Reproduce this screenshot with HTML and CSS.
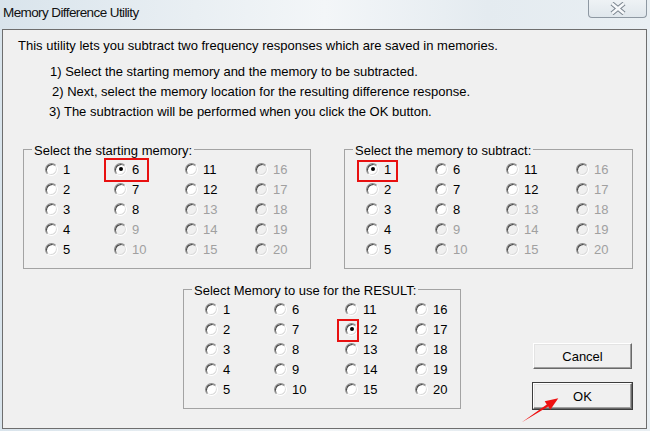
FILE: index.html
```html
<!DOCTYPE html>
<html lang="en">
<head>
<meta charset="utf-8">
<title>Memory Difference Utility</title>
<link rel="stylesheet" href="styles.css">
</head>
<body>
<div class="titlebar">
  <div class="title">Memory Difference Utility</div>
  <div class="close">
    <svg width="16" height="13" viewBox="0 0 16 13">
      <path d="M2 1.5 L14 11.5 M14 1.5 L2 11.5" stroke="#7b858f" stroke-width="4.6" fill="none"/>
      <path d="M2 1.5 L14 11.5 M14 1.5 L2 11.5" stroke="#f6f8fa" stroke-width="2.6" fill="none"/>
    </svg>
  </div>
</div>
<div class="client">
  <div class="intro">
    <p class="l1">This utility lets you subtract two frequency responses which are saved in memories.</p>
    <p class="step s1">1) Select the starting memory and the memory to be subtracted.</p>
    <p class="step s2">2) Next, select the memory location for the resulting difference response.</p>
    <p class="step s3">3) The subtraction will be performed when you click the OK button.</p>
  </div>
  <div class="toprow">
    <fieldset class="group g1">
      <legend>Select the starting memory:</legend>
      <div class="grid">
        <label class="opt"><span class="rb"></span>1</label>
        <label class="opt"><span class="rb on"></span>6<span class="mark mark-a"></span></label>
        <label class="opt"><span class="rb"></span>11</label>
        <label class="opt dis"><span class="rb"></span>16</label>
        <label class="opt"><span class="rb"></span>2</label>
        <label class="opt"><span class="rb"></span>7</label>
        <label class="opt"><span class="rb"></span>12</label>
        <label class="opt dis"><span class="rb"></span>17</label>
        <label class="opt"><span class="rb"></span>3</label>
        <label class="opt"><span class="rb"></span>8</label>
        <label class="opt dis"><span class="rb"></span>13</label>
        <label class="opt dis"><span class="rb"></span>18</label>
        <label class="opt"><span class="rb"></span>4</label>
        <label class="opt dis"><span class="rb"></span>9</label>
        <label class="opt dis"><span class="rb"></span>14</label>
        <label class="opt dis"><span class="rb"></span>19</label>
        <label class="opt"><span class="rb"></span>5</label>
        <label class="opt dis"><span class="rb"></span>10</label>
        <label class="opt dis"><span class="rb"></span>15</label>
        <label class="opt dis"><span class="rb"></span>20</label>
      </div>
    </fieldset>
    <fieldset class="group g2">
      <legend>Select the memory to subtract:</legend>
      <div class="grid">
        <label class="opt"><span class="rb on"></span>1<span class="mark mark-b"></span></label>
        <label class="opt"><span class="rb"></span>6</label>
        <label class="opt"><span class="rb"></span>11</label>
        <label class="opt dis"><span class="rb"></span>16</label>
        <label class="opt"><span class="rb"></span>2</label>
        <label class="opt"><span class="rb"></span>7</label>
        <label class="opt"><span class="rb"></span>12</label>
        <label class="opt dis"><span class="rb"></span>17</label>
        <label class="opt"><span class="rb"></span>3</label>
        <label class="opt"><span class="rb"></span>8</label>
        <label class="opt dis"><span class="rb"></span>13</label>
        <label class="opt dis"><span class="rb"></span>18</label>
        <label class="opt"><span class="rb"></span>4</label>
        <label class="opt dis"><span class="rb"></span>9</label>
        <label class="opt dis"><span class="rb"></span>14</label>
        <label class="opt dis"><span class="rb"></span>19</label>
        <label class="opt"><span class="rb"></span>5</label>
        <label class="opt dis"><span class="rb"></span>10</label>
        <label class="opt dis"><span class="rb"></span>15</label>
        <label class="opt dis"><span class="rb"></span>20</label>
      </div>
    </fieldset>
  </div>
  <div class="bottomrow">
    <fieldset class="group g3">
      <legend>Select Memory to use for the RESULT:</legend>
      <div class="grid">
        <label class="opt"><span class="rb"></span>1</label>
        <label class="opt"><span class="rb"></span>6</label>
        <label class="opt"><span class="rb"></span>11</label>
        <label class="opt"><span class="rb"></span>16</label>
        <label class="opt"><span class="rb"></span>2</label>
        <label class="opt"><span class="rb"></span>7</label>
        <label class="opt"><span class="rb on"></span>12<span class="mark mark-c"></span></label>
        <label class="opt"><span class="rb"></span>17</label>
        <label class="opt"><span class="rb"></span>3</label>
        <label class="opt"><span class="rb"></span>8</label>
        <label class="opt"><span class="rb"></span>13</label>
        <label class="opt"><span class="rb"></span>18</label>
        <label class="opt"><span class="rb"></span>4</label>
        <label class="opt"><span class="rb"></span>9</label>
        <label class="opt"><span class="rb"></span>14</label>
        <label class="opt"><span class="rb"></span>19</label>
        <label class="opt"><span class="rb"></span>5</label>
        <label class="opt"><span class="rb"></span>10</label>
        <label class="opt"><span class="rb"></span>15</label>
        <label class="opt"><span class="rb"></span>20</label>
      </div>
    </fieldset>
    <div class="buttons">
      <button class="btn">Cancel</button>
      <button class="btn default">OK</button>
    </div>
  </div>
</div>
<svg class="arrow" width="52" height="36" viewBox="0 0 52 36">
  <polygon points="11.5,32.5 38.2,16.5 40.3,19.7 48.3,8.3 34.7,11.3 36.8,14.5" fill="#ee1111"/>
</svg>
</body>
</html>
```
FILE: styles.css
```css
* { box-sizing: border-box; }
html, body { margin: 0; }
body {
  width: 650px;
  height: 431px;
  overflow: hidden;
  position: relative;
  background: linear-gradient(90deg, #d9e4ec 0%, #e9eff3 30%, #f3f6f8 50%, #e4ebf0 75%, #e9eff3 100%);
  font-family: "Liberation Sans", Arial, sans-serif;
  font-size: 13px;
  color: #000;
}
.titlebar {
  height: 29px;
  display: flex;
  align-items: flex-start;
}
.title {
  padding: 4px 0 0 3px;
  line-height: 18px;
  font-size: 13.5px;
  letter-spacing: -0.6px;
  color: #111;
}
.close {
  margin-left: auto;
  margin-right: 3px;
  width: 59px;
  height: 18px;
  border: 1px solid #8e98a2;
  border-top: 0;
  border-radius: 0 0 4px 4px;
  background: linear-gradient(#eef2f5, #e0e7ec);
  display: flex;
  align-items: center;
  justify-content: center;
}
.client {
  margin: 0 3px 0 2px;
  height: 400px;
  border: 1px solid #6e6e6e;
  background: #f0f0f0;
}
.intro {
  padding: 6px 0 0 15px;
  line-height: 20px;
}
.intro p { margin: 0; }
.intro .l1 { margin-bottom: 6px; }
.intro .s1 { padding-left: 32px; }
.intro .s2 { padding-left: 34px; }
.intro .s3 { padding-left: 31px; }
.toprow {
  display: flex;
  gap: 33px;
  margin-top: 18px;
  padding-left: 20px;
}
.group {
  margin: 0;
  padding: 0 0 9px 0;
  min-width: 0;
  border: 1px solid #a3a3a3;
}
.g1 { width: 288px; }
.g2 { width: 289px; }
.g3 { width: 278px; }
legend {
  margin-left: 8px;
  padding: 3px 2px 0;
  line-height: 16px;
}
.grid {
  display: grid;
  grid-template-columns: 69px 71px 70px 1fr;
  grid-auto-rows: 20px;
  padding-left: 21px;
}
.opt {
  display: flex;
  align-items: center;
  gap: 5px;
  position: relative;
  line-height: 15px;
}
.rb {
  position: relative;
  flex: none;
  width: 13px;
  height: 13px;
  border-radius: 50%;
  border: 1px solid;
  border-color: #8a8a8a #ffffff #ffffff #8a8a8a;
  background: #fff;
  box-shadow: inset 1px 1px 0 #474747, inset -1px -1px 0 #dcdcdc;
}
.rb.on::after {
  content: "";
  position: absolute;
  left: 3.5px;
  top: 3.5px;
  width: 4px;
  height: 4px;
  border-radius: 50%;
  background: #000;
}
.opt.dis { color: #a0a0a0; }
.opt.dis .rb { background: #f0f0f0; }
.mark {
  position: absolute;
  border: 2px solid #e81010;
}
.mark-a { left: -10px; top: -1px; width: 45px; height: 24px; }
.mark-b { left: -9px; top: 1px; width: 41px; height: 22px; }
.mark-c { left: -8px; top: 0; width: 22px; height: 23px; }
.bottomrow {
  display: flex;
  margin-top: 11px;
  padding-left: 180px;
}
.buttons {
  display: flex;
  flex-direction: column;
  gap: 14px;
  margin-left: 72px;
  margin-top: 63px;
  width: 99px;
}
.btn {
  width: 99px;
  height: 26px;
  padding: 0;
  font: inherit;
  color: #000;
  background: #f0f0f0;
  border: 1px solid;
  border-color: #ffffff #696969 #696969 #ffffff;
  border-radius: 0;
  box-shadow: inset -1px -1px 0 #a0a0a0, inset 1px 1px 0 #e3e3e3;
}
.btn.default {
  box-shadow: 0 0 0 1px #3c3c3c, inset -1px -1px 0 #a0a0a0, inset 1px 1px 0 #e3e3e3;
}
.arrow {
  position: absolute;
  left: 510px;
  top: 390px;
}
```
